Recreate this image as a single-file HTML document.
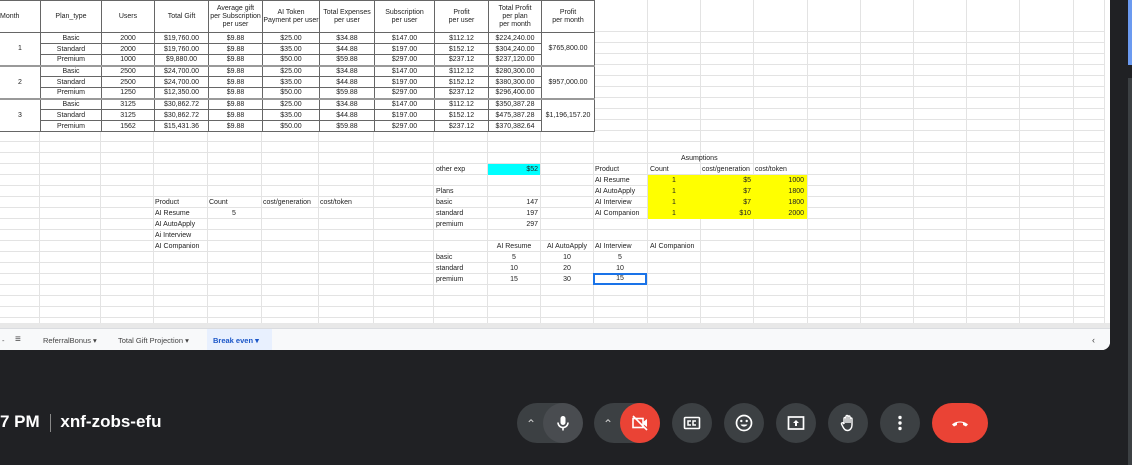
<!DOCTYPE html>
<html><head><meta charset="utf-8"><style>
*{margin:0;padding:0;box-sizing:border-box}
body{width:1132px;height:465px;background:#202124;position:relative;overflow:hidden;font-family:"Liberation Sans",sans-serif}
#sheet{position:absolute;left:0;top:0;width:1110px;height:350px;background:#fff;border-bottom-right-radius:8px;overflow:hidden}
#grid{position:absolute;left:0;top:31px;width:1105px;height:292px;background:repeating-linear-gradient(to bottom,#e3e3e3 0,#e3e3e3 1px,transparent 1px,transparent 11px)}
.v{position:absolute;top:0;width:1px;height:323px;background:#e3e3e3}
table{position:absolute;left:-1px;top:0;border-collapse:collapse;font-size:7px;color:#222;background:#fff}
td{border:1px solid #666;text-align:center;height:11px;line-height:9px;padding:0;white-space:nowrap;overflow:hidden}
tr.h td{height:32px;line-height:8px}
tr.tk td{border-top:2px solid #999}
.t{position:absolute;font-size:7px;color:#222;line-height:11px;white-space:nowrap}
.r{text-align:right}.c{text-align:center}
#tabs{position:absolute;left:0;top:328px;width:1110px;height:22px;background:#f8f9fa;border-top:1px solid #dadce0;font-size:7.5px;color:#444}
#tabs span{position:absolute;top:7px}
.btn{position:absolute;top:403px;width:40px;height:40px;border-radius:20px;background:#3c4043}
.btn svg{position:absolute;left:10px;top:10px}
</style></head><body>
<div id="sheet">
<div id="grid"></div>
<div class="v" style="left:39px"></div><div class="v" style="left:100px"></div><div class="v" style="left:153px"></div><div class="v" style="left:207px"></div><div class="v" style="left:261px"></div><div class="v" style="left:318px"></div><div class="v" style="left:373px"></div><div class="v" style="left:433px"></div><div class="v" style="left:487px"></div><div class="v" style="left:540px"></div><div class="v" style="left:593px"></div><div class="v" style="left:647px"></div><div class="v" style="left:700px"></div><div class="v" style="left:753px"></div><div class="v" style="left:807px"></div><div class="v" style="left:860px"></div><div class="v" style="left:913px"></div><div class="v" style="left:966px"></div><div class="v" style="left:1019px"></div><div class="v" style="left:1073px"></div><div class="v" style="left:1104px"></div>
<table>
<colgroup><col style="width:41px"><col style="width:61px"><col style="width:53px"><col style="width:54px"><col style="width:54px"><col style="width:57px"><col style="width:55px"><col style="width:60px"><col style="width:54px"><col style="width:53px"><col style="width:53px"></colgroup>
<tr class="h"><td style="text-align:left">Month</td><td>Plan_type</td><td>Users</td><td>Total Gift</td><td>Average gift<br>per Subscription<br>per user</td><td>AI Token<br>Payment per user</td><td>Total Expenses<br>per user</td><td>Subscription<br>per user</td><td>Profit<br>per user</td><td>Total Profit<br>per plan<br>per month</td><td>Profit<br>per month</td></tr>
<tr><td rowspan="3">1</td><td>Basic</td><td>2000</td><td>$19,760.00</td><td>$9.88</td><td>$25.00</td><td>$34.88</td><td>$147.00</td><td>$112.12</td><td>$224,240.00</td><td rowspan="3">$765,800.00</td></tr>
<tr><td>Standard</td><td>2000</td><td>$19,760.00</td><td>$9.88</td><td>$35.00</td><td>$44.88</td><td>$197.00</td><td>$152.12</td><td>$304,240.00</td></tr>
<tr><td>Premium</td><td>1000</td><td>$9,880.00</td><td>$9.88</td><td>$50.00</td><td>$59.88</td><td>$297.00</td><td>$237.12</td><td>$237,120.00</td></tr>
<tr class="tk"><td rowspan="3">2</td><td>Basic</td><td>2500</td><td>$24,700.00</td><td>$9.88</td><td>$25.00</td><td>$34.88</td><td>$147.00</td><td>$112.12</td><td>$280,300.00</td><td rowspan="3">$957,000.00</td></tr>
<tr><td>Standard</td><td>2500</td><td>$24,700.00</td><td>$9.88</td><td>$35.00</td><td>$44.88</td><td>$197.00</td><td>$152.12</td><td>$380,300.00</td></tr>
<tr><td>Premium</td><td>1250</td><td>$12,350.00</td><td>$9.88</td><td>$50.00</td><td>$59.88</td><td>$297.00</td><td>$237.12</td><td>$296,400.00</td></tr>
<tr class="tk"><td rowspan="3">3</td><td>Basic</td><td>3125</td><td>$30,862.72</td><td>$9.88</td><td>$25.00</td><td>$34.88</td><td>$147.00</td><td>$112.12</td><td>$350,387.28</td><td rowspan="3">$1,196,157.20</td></tr>
<tr><td>Standard</td><td>3125</td><td>$30,862.72</td><td>$9.88</td><td>$35.00</td><td>$44.88</td><td>$197.00</td><td>$152.12</td><td>$475,387.28</td></tr>
<tr><td>Premium</td><td>1562</td><td>$15,431.36</td><td>$9.88</td><td>$50.00</td><td>$59.88</td><td>$297.00</td><td>$237.12</td><td>$370,382.64</td></tr>
</table>

<div style="position:absolute;left:488px;top:164px;width:52px;height:11px;background:#00ffff"></div>
<div style="position:absolute;left:648px;top:175px;width:159px;height:44px;background:#ffff00"></div>

<div class="t" style="left:681px;top:153px">Asumptions</div>
<div class="t" style="left:436px;top:164px">other exp</div><div class="t r" style="left:488px;top:164px;width:50px">$52</div>
<div class="t" style="left:595px;top:164px">Product</div><div class="t" style="left:650px;top:164px">Count</div><div class="t" style="left:702px;top:164px">cost/generation</div><div class="t" style="left:755px;top:164px">cost/token</div>
<div class="t" style="left:595px;top:175px">AI Resume</div><div class="t" style="left:595px;top:186px">AI AutoApply</div><div class="t" style="left:595px;top:197px">AI Interview</div><div class="t" style="left:595px;top:208px">AI Companion</div>
<div class="t c" style="left:648px;top:175px;width:52px">1</div><div class="t c" style="left:648px;top:186px;width:52px">1</div><div class="t c" style="left:648px;top:197px;width:52px">1</div><div class="t c" style="left:648px;top:208px;width:52px">1</div>
<div class="t r" style="left:701px;top:175px;width:50px">$5</div><div class="t r" style="left:701px;top:186px;width:50px">$7</div><div class="t r" style="left:701px;top:197px;width:50px">$7</div><div class="t r" style="left:701px;top:208px;width:50px">$10</div>
<div class="t r" style="left:754px;top:175px;width:50px">1000</div><div class="t r" style="left:754px;top:186px;width:50px">1800</div><div class="t r" style="left:754px;top:197px;width:50px">1800</div><div class="t r" style="left:754px;top:208px;width:50px">2000</div>
<div class="t" style="left:436px;top:186px">Plans</div><div class="t" style="left:436px;top:197px">basic</div><div class="t" style="left:436px;top:208px">standard</div><div class="t" style="left:436px;top:219px">premium</div>
<div class="t r" style="left:488px;top:197px;width:50px">147</div><div class="t r" style="left:488px;top:208px;width:50px">197</div><div class="t r" style="left:488px;top:219px;width:50px">297</div>

<div class="t" style="left:155px;top:197px">Product</div><div class="t" style="left:209px;top:197px">Count</div><div class="t" style="left:263px;top:197px">cost/generation</div><div class="t" style="left:320px;top:197px">cost/token</div>
<div class="t" style="left:155px;top:208px">AI Resume</div><div class="t c" style="left:208px;top:208px;width:52px">5</div>
<div class="t" style="left:155px;top:219px">AI AutoApply</div><div class="t" style="left:155px;top:230px">Ai Interview</div><div class="t" style="left:155px;top:241px">AI Companion</div>

<div class="t c" style="left:488px;top:241px;width:52px">AI Resume</div><div class="t c" style="left:541px;top:241px;width:52px">AI AutoApply</div><div class="t" style="left:595px;top:241px">AI Interview</div><div class="t" style="left:650px;top:241px">AI Companion</div>
<div class="t" style="left:436px;top:252px">basic</div><div class="t" style="left:436px;top:263px">standard</div><div class="t" style="left:436px;top:274px">premium</div>
<div class="t c" style="left:488px;top:252px;width:52px">5</div><div class="t c" style="left:488px;top:263px;width:52px">10</div><div class="t c" style="left:488px;top:274px;width:52px">15</div>
<div class="t c" style="left:541px;top:252px;width:52px">10</div><div class="t c" style="left:541px;top:263px;width:52px">20</div><div class="t c" style="left:541px;top:274px;width:52px">30</div>
<div class="t c" style="left:594px;top:252px;width:52px">5</div><div class="t c" style="left:594px;top:263px;width:52px">10</div>
<div class="t c" style="left:593px;top:273px;width:54px;height:12px;border:2px solid #1a73e8;line-height:8px">15</div>

<div style="position:absolute;left:0;top:323px;width:1110px;height:5px;background:#e8e8e8"></div>
<div id="tabs">
<span style="left:2px">-</span><span style="left:15px;top:5px;font-size:10px">≡</span>
<span style="left:43px">ReferralBonus ▾</span>
<span style="left:118px">Total Gift Projection ▾</span>
<div style="position:absolute;left:207px;top:0;width:65px;height:22px;background:#e8f0fe"></div>
<span style="left:213px;color:#1a56c8;font-weight:bold">Break even ▾</span>
<span style="left:1092px;top:6px;font-size:9px">‹</span>
</div>
</div>
<div style="position:absolute;left:1128px;top:0;width:4px;height:65px;background:#6b9af0"></div>
<div style="position:absolute;left:1128px;top:78px;width:4px;height:387px;background:#3c4043"></div>

<div style="position:absolute;left:0;top:412px;color:#fff;font-size:17px;font-weight:bold;line-height:20px">7 PM <span style="display:inline-block;width:1px;height:18px;background:#888;vertical-align:middle;margin:0 9px 0 6px"></span>xnf-zobs-efu</div>

<div class="btn" style="left:517px;width:65px"></div>
<div class="btn" style="left:543px;background:#494c50"><svg width="20" height="20" viewBox="0 0 20 20"><rect x="7.5" y="3" width="5" height="9" rx="2.5" fill="#fff"/><path d="M5 9.5a5 5 0 0 0 10 0M10 14.5v3" stroke="#fff" stroke-width="1.6" fill="none"/></svg></div>
<div style="position:absolute;left:526px;top:417px;color:#ccc;font-size:12px">⌃</div>
<div class="btn" style="left:594px;width:66px"></div>
<div style="position:absolute;left:603px;top:417px;color:#ccc;font-size:12px">⌃</div>
<div class="btn" style="left:620px;background:#ea4335"><svg width="20" height="20" viewBox="0 0 20 20"><rect x="3" y="5.5" width="10" height="9" fill="none" stroke="#fff" stroke-width="1.6"/><path d="M13 9l4-3v8l-4-3z" fill="#fff"/><path d="M3 3l14 14" stroke="#fff" stroke-width="1.6"/></svg></div>
<div class="btn" style="left:672px"><svg width="20" height="20" viewBox="0 0 20 20"><rect x="2.5" y="4.5" width="15" height="11" rx="1" fill="none" stroke="#fff" stroke-width="1.6"/><path d="M9 8H6v4h3M14 8h-3v4h3" stroke="#fff" stroke-width="1.5" fill="none"/></svg></div>
<div class="btn" style="left:724px"><svg width="20" height="20" viewBox="0 0 20 20"><circle cx="10" cy="10" r="7.5" fill="none" stroke="#fff" stroke-width="1.7"/><circle cx="7.3" cy="8" r="1.2" fill="#fff"/><circle cx="12.7" cy="8" r="1.2" fill="#fff"/><path d="M6.5 11.5a4 4 0 0 0 7 0z" fill="#fff"/></svg></div>
<div class="btn" style="left:776px"><svg width="20" height="20" viewBox="0 0 20 20"><rect x="2.5" y="4" width="15" height="12" fill="none" stroke="#fff" stroke-width="1.7"/><path d="M10 7l3 3h-2v3H9v-3H7z" fill="#fff"/></svg></div>
<div class="btn" style="left:828px"><svg width="20" height="20" viewBox="0 0 20 20"><path d="M6 11V5.5a1 1 0 0 1 2 0V10M8 10V3.5a1 1 0 0 1 2 0V10M10 10V4a1 1 0 0 1 2 0v6M12 10V6a1 1 0 0 1 2 0v6c0 3-2 5.5-4.5 5.5S6 16 5 14l-1.5-3a1 1 0 0 1 2-.5L6 11" fill="none" stroke="#fff" stroke-width="1.4"/></svg></div>
<div class="btn" style="left:880px"><svg width="20" height="20" viewBox="0 0 20 20"><circle cx="10" cy="4.5" r="1.7" fill="#fff"/><circle cx="10" cy="10" r="1.7" fill="#fff"/><circle cx="10" cy="15.5" r="1.7" fill="#fff"/></svg></div>
<div class="btn" style="left:932px;width:56px;background:#ea4335"><svg style="left:18px" width="20" height="20" viewBox="0 0 20 20"><path d="M2 11.5c4-4 12-4 16 0l-2 2-3-1.5v-2c-2-.6-4-.6-6 0v2l-3 1.5z" fill="#fff"/></svg></div>
</body></html>
